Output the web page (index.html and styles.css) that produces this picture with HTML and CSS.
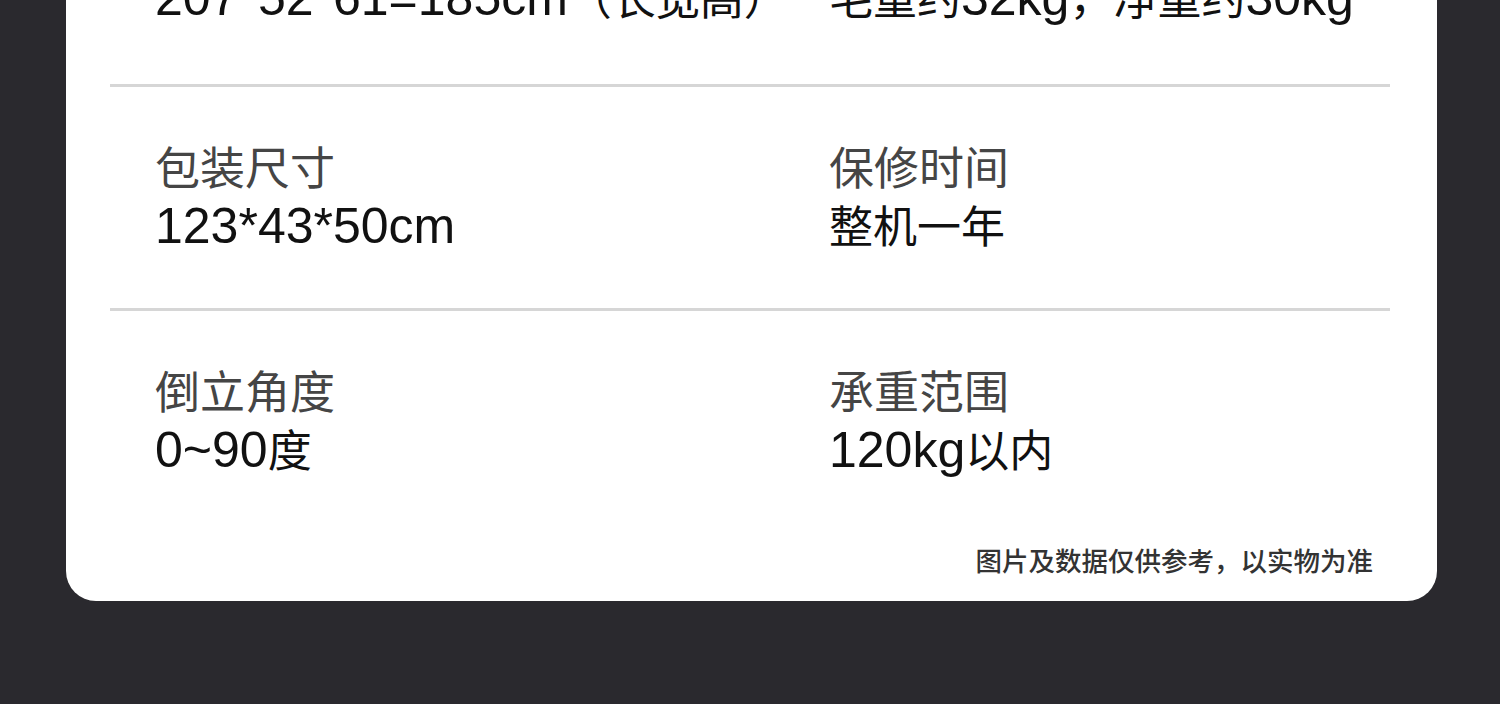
FILE: index.html
```html
<!DOCTYPE html>
<html lang="zh-CN">
<head>
<meta charset="utf-8">
<title>产品参数</title>
<link rel="stylesheet" href="styles.css">
</head>
<body>
<div class="card">
  <div class="row first">
    <div class="cell">
      <div class="label">产品尺寸</div>
      <div class="value"><span class="num">207*52*61=185cm</span>（长宽高）</div>
    </div>
    <div class="cell">
      <div class="label">产品重量</div>
      <div class="value">毛重约<span class="num">32kg</span>，净重约<span class="num">30kg</span></div>
    </div>
  </div>
  <div class="row">
    <div class="cell">
      <div class="label">包装尺寸</div>
      <div class="value"><span class="num">123*43*50cm</span></div>
    </div>
    <div class="cell">
      <div class="label">保修时间</div>
      <div class="value">整机一年</div>
    </div>
  </div>
  <div class="row last">
    <div class="cell">
      <div class="label">倒立角度</div>
      <div class="value"><span class="num">0~90</span>度</div>
    </div>
    <div class="cell">
      <div class="label">承重范围</div>
      <div class="value"><span class="num">120kg</span>以内</div>
    </div>
  </div>
  <div class="note">图片及数据仅供参考，以实物为准</div>
</div>
</body>
</html>
```

FILE: styles.css
```css
html, body {
  margin: 0;
  padding: 0;
}
body {
  background: #2a292e;
  height: 704px;
  overflow: hidden;
  font-family: "Liberation Sans", "Noto Sans CJK SC", sans-serif;
}
.card {
  margin-top: -137px;
  margin-left: 66px;
  width: 1371px;
  box-sizing: border-box;
  padding: 0 47px 23px 44px;
  background: #ffffff;
  border-radius: 0 0 30px 30px;
}
.row {
  display: grid;
  grid-template-columns: 674px 1fr;
  padding: 54px 45px 51px;
  border-bottom: 3px solid #d6d6d6;
}
.row.first {
  padding-top: 50px;
  padding-bottom: 55px;
}
.row.last {
  border-bottom: none;
}
.label {
  font-size: 45px;
  line-height: 58px;
  color: #454545;
}
.value {
  font-size: 44px;
  line-height: 58px;
  color: #111111;
  white-space: nowrap;
}
.num {
  font-size: 50px;
  line-height: 1;
}
.note {
  margin-top: 10px;
  padding-right: 17px;
  text-align: right;
  font-family: "Noto Sans CJK SC", sans-serif;
  font-size: 26.5px;
  line-height: 36px;
  font-weight: 500;
  color: #333333;
}
```
